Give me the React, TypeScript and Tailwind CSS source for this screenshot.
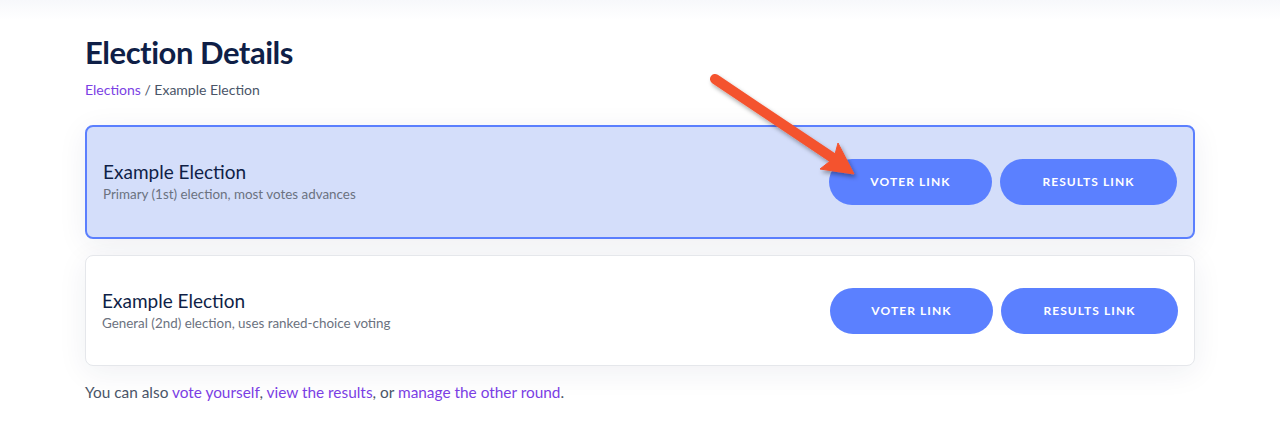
import React from 'react';

interface Round {
  name: string;
  description: string;
  active?: boolean;
}

const rounds: Round[] = [
  { name: 'Example Election', description: 'Primary (1st) election, most votes advances', active: true },
  { name: 'Example Election', description: 'General (2nd) election, uses ranked-choice voting' },
];

const font = { fontFamily: 'Lato, "Open Sans", sans-serif' };

const RoundCard: React.FC<{ round: Round }> = ({ round }) => (
  <div
    className={`flex items-center justify-between rounded-lg pl-4 pr-4 shadow-[0_6px_30px_rgba(30,41,80,0.07)] ${
      round.active
        ? 'h-[114px] border-2 border-[#5b7ffe] bg-[#d4defa]'
        : 'h-[111px] border border-[#e5e7eb] bg-white'
    }`}
  >
    <div className="flex flex-col">
      <h3 className="text-[19px] leading-6 text-[#0f1f47]">{round.name}</h3>
      <p className="text-[13.4px] leading-5 text-[#6b7280]">{round.description}</p>
    </div>
    <div className="flex items-center gap-2">
      <button className="h-[46px] w-[163px] rounded-full bg-[#5b80ff] text-[12px] font-bold tracking-[0.09em] text-white">
        VOTER LINK
      </button>
      <button className="h-[46px] w-[177px] rounded-full bg-[#5b80ff] text-[12px] font-bold tracking-[0.09em] text-white">
        RESULTS LINK
      </button>
    </div>
  </div>
);

export default function App() {
  return (
    <div className="relative h-[445px] w-full overflow-hidden bg-white" style={font}>
      <div className="h-5 bg-gradient-to-b from-[#f7f8fb] to-white" />
      <div className="mx-auto max-w-[1110px] pt-[12px]">
        <h1 className="text-[31px] font-bold leading-10 tracking-[-0.015em] text-[#0f1f47]">Election Details</h1>
        <div className="mt-[8px] text-[14px] leading-5 text-[#4a5568]">
          <a className="text-[#7b3fe4]">Elections</a> / Example Election
        </div>
        <div className="mt-[25px] flex flex-col gap-4">
          {rounds.map((r, i) => (
            <RoundCard key={i} round={r} />
          ))}
        </div>
        <p className="mt-[14px] text-[15.4px] leading-6 text-[#4a5568]">
          You can also <a className="text-[#7b3fe4]">vote yourself</a>, <a className="text-[#7b3fe4]">view the results</a>, or{' '}
          <a className="text-[#7b3fe4]">manage the other round</a>.
        </p>
      </div>

      {/* annotation arrow */}
      <svg className="pointer-events-none absolute left-0 top-0" width="1280" height="445" viewBox="0 0 1280 445">
        <defs>
          <filter id="arrowShadow" x="-20%" y="-20%" width="140%" height="140%">
            <feDropShadow dx="2" dy="3" stdDeviation="2" floodColor="#000" floodOpacity="0.35" />
          </filter>
        </defs>
        <g filter="url(#arrowShadow)" fill="#f4532f" stroke="#f4532f">
          <line x1="715" y1="79" x2="833" y2="158" strokeWidth="10" strokeLinecap="round" />
          <polygon points="854,174 838,143 834,158 820,169" strokeWidth="1" strokeLinejoin="round" />
        </g>
      </svg>
    </div>
  );
}
